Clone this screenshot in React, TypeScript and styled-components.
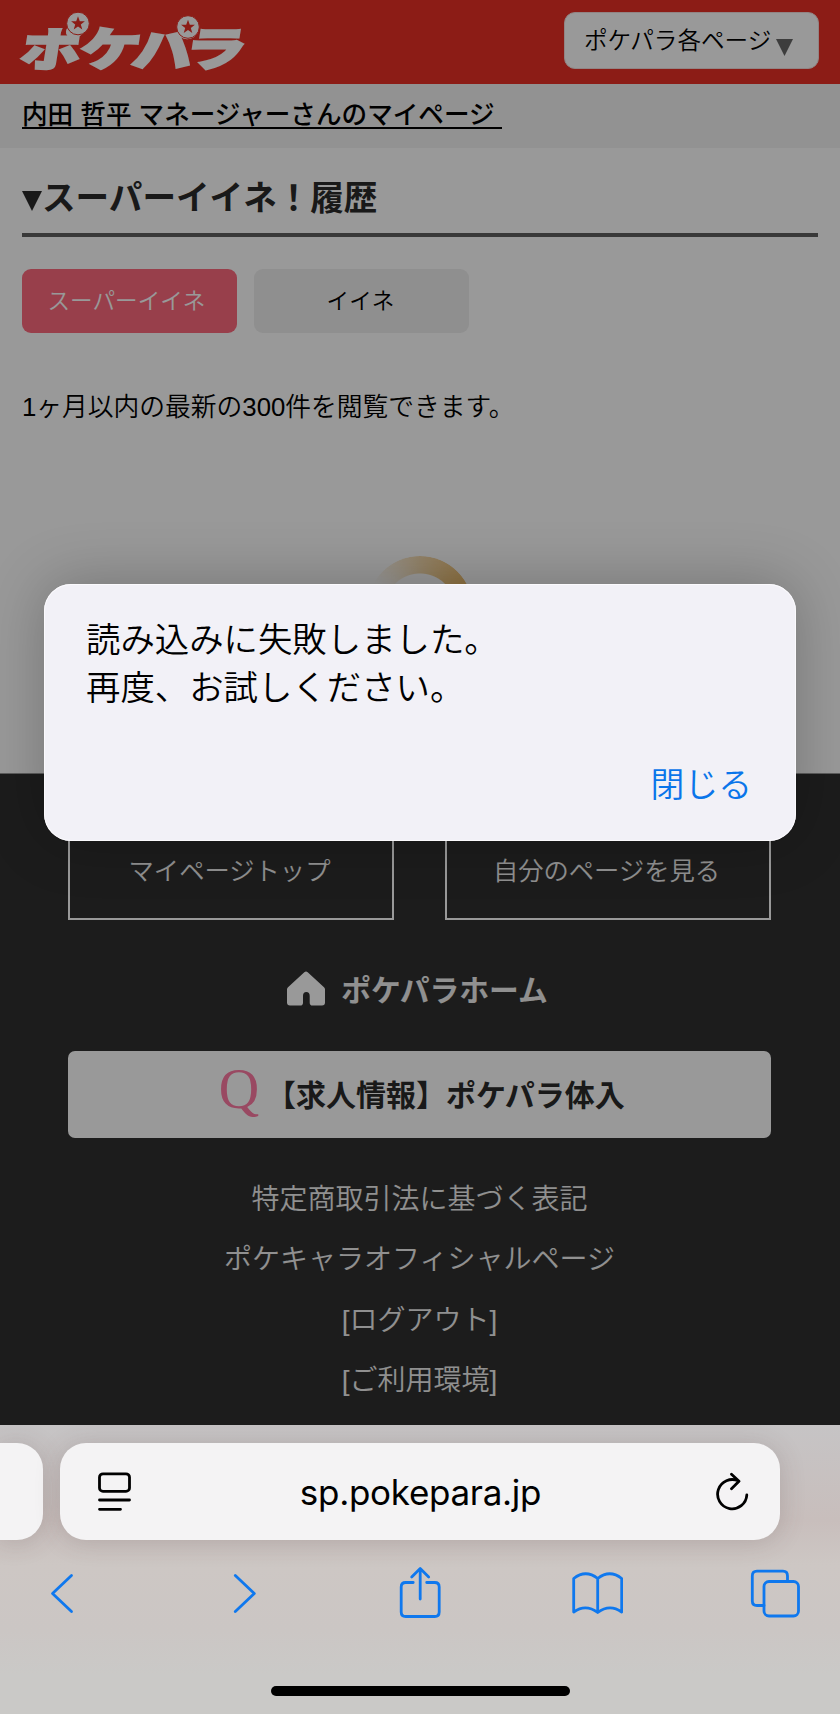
import {useState} from "react";
import styled, {createGlobalStyle} from "styled-components";

const GlobalStyle = createGlobalStyle`
  * {
    box-sizing: border-box;
  }

  body {
    margin: 0;
    background: #cac9c7;
    font-family: "Liberation Sans", "Noto Sans CJK JP", sans-serif;
    font-weight: 350;
    color: #000;
  }

  button {
    font-family: inherit;
    font-weight: inherit;
    padding: 0;
    border: 0;
    background: none;
  }
`

const Screen = styled.div`
  width: 840px;
  height: 1714px;
  display: flex;
  flex-direction: column;
  overflow: hidden;
`

const Page = styled.div`
  position: relative;
  height: 1425px;
  flex: none;
  background: #fff;
  white-space: nowrap;
  overflow: hidden;
`

const Header = styled.header`
  height: 84px;
  background: #e92f25;
  display: flex;
  justify-content: space-between;
  align-items: flex-start;
  padding-right: 21px;
`

const SiteSelect = styled.button`
  width: 255px;
  height: 57px;
  margin-top: 12px;
  border: 1px solid #f3dddc;
  border-radius: 11px;
  background: #fff;
  display: flex;
  align-items: center;
  padding: 0 0 4px 19px;
  font-size: 23.6px;
  color: #000;
`

const SelectArrow = styled.svg`
  width: 17px;
  height: 17px;
  margin: 18px 0 0 5px;
  fill: #666;
`

const UserBar = styled.div`
  height: 64px;
  background: #f3f3f3;
  padding: 0 22px;
`

const UserLink = styled.a`
  display: inline-block;
  height: 45px;
  line-height: 63px;
  border-bottom: 2px solid #000;
  font-size: 25.6px;
  font-weight: 500;
  white-space: pre;
`

const Main = styled.main`
  height: 625px;
  padding: 0 22px;
`

const Title = styled.h1`
  margin: 0;
  height: 89px;
  border-bottom: 4px solid #606060;
  display: flex;
  align-items: center;
  font-size: 33.6px;
  font-weight: 700;
  line-height: 50px;
  color: #2b2b2b;
  padding-top: 17px;
`

const TitleMark = styled.svg`
  width: 20px;
  height: 20px;
  margin-top: 3px;
  fill: #2b2b2b;
`

const Tabs = styled.div`
  display: flex;
  gap: 17px;
  margin-top: 32px;
`

const Tab = styled.button<{ $active: boolean }>`
  width: 215px;
  height: 64px;
  border-radius: 9px;
  background: ${props => props.$active ? "#fd697d" : "#eeeeee"};
  color: ${props => props.$active ? "#fff" : "#000"};
  font-size: 22.6px;
  padding: 0 ${props => props.$active ? "6px" : "2px"} 3px 0;
`

const Note = styled.p`
  margin: 55px 0 0;
  font-size: 25.75px;
  line-height: 38px;
`

const Loader = styled.div`
  width: 106px;
  height: 106px;
  margin: 130px auto 0;
  border-radius: 50%;
  background: conic-gradient(from -60deg, rgba(238, 190, 110, 0) 0deg, rgba(238, 190, 110, 0.55) 60deg, #eebe6e 120deg, #eebe6e 300deg, rgba(238, 190, 110, 0) 360deg);
  mask: radial-gradient(circle, transparent 35px, #000 36px);
`

const Footer = styled.footer`
  height: 652px;
  background: #2f2f2f;
  border-top: 1px solid #9a9a9a;
  color: #f0f0f0;
  display: flex;
  flex-direction: column;
  align-items: center;
`

const FooterButtons = styled.div`
  display: flex;
  gap: 51px;
  margin: 47px 1px 0 0;
`

const OutlineButton = styled.button`
  width: 326px;
  height: 99px;
  border: 2px solid #fff;
  font-size: 25.3px;
  color: #f0f0f0;
  padding: 0 3px 3px 0;
`

const HomeLink = styled.a`
  display: flex;
  align-items: center;
  gap: 16px;
  height: 46px;
  margin: 45px 5px 0 0;
  font-size: 29.8px;
  font-weight: 700;
`

const JobButton = styled.button`
  width: 703px;
  height: 87px;
  margin: 40px 1px 0 0;
  border-radius: 7px;
  background: #fff;
  display: flex;
  align-items: center;
  padding: 0 0 3px 150px;
  font-size: 30px;
  font-weight: 700;
  color: #2b2b2b;
`

const JobMark = styled.span`
  width: 42px;
  margin: -9px 6px 0 0;
  font-family: "Liberation Serif", serif;
  font-size: 56px;
  font-weight: 400;
  line-height: 60px;
  color: #ff7aa3;
`

const FooterLinks = styled.div`
  display: flex;
  flex-direction: column;
  align-items: center;
  margin: 32px 1px 0 0;
`

const FooterLink = styled.a`
  font-size: 28px;
  line-height: 60.4px;
`

const Backdrop = styled.div`
  position: absolute;
  inset: 0;
  background: rgba(0, 0, 0, 0.4);
`

const Dialog = styled.div`
  position: absolute;
  top: 584px;
  left: 44px;
  width: 752px;
  height: 257px;
  border-radius: 27px;
  background: #f2f1f7;
  box-shadow: inset 0 0 0 1px #fbfafd, 0 -2px 60px rgba(0, 0, 0, 0.24);
  padding: 32px 44px 0 42px;
  display: flex;
  flex-direction: column;
`

const DialogText = styled.p`
  margin: 0;
  font-size: 34.4px;
  line-height: 48px;
`

const DialogClose = styled.button`
  align-self: flex-end;
  margin-top: 48px;
  font-size: 33.8px;
  line-height: 50px;
  color: #0a75ea;
`

const Browser = styled.div`
  flex: 1;
  background: linear-gradient(#c6c4c5 0, #c8bebc 95px, #cdc7c4 140px, #cbc6c4 205px, #cac9c7 250px);
  display: flex;
  flex-direction: column;
`

const AddressRow = styled.div`
  display: flex;
  gap: 17px;
  padding-top: 18px;
`

const NeighbourTab = styled.div`
  width: 43px;
  height: 97px;
  border-radius: 0 26px 26px 0;
  background: #f4f3f4;
  box-shadow: 0 2px 26px rgba(80, 60, 60, 0.2);
`

const AddressBar = styled.div`
  width: 720px;
  height: 97px;
  border-radius: 26px;
  background: #f4f3f4;
  box-shadow: 0 2px 26px rgba(80, 60, 60, 0.2);
  display: flex;
  align-items: center;
  justify-content: space-between;
  padding: 0 31px 0 37px;
`

const Address = styled.span`
  font-family: Inter, sans-serif;
  font-size: 35px;
  font-weight: 400;
  letter-spacing: -0.3px;
  padding: 0 5px 0 0;
`

const StrokeIcon = styled.svg`
  display: block;
  fill: none;
  stroke: currentColor;
  stroke-width: 2.8;
  stroke-linecap: round;
  stroke-linejoin: round;
`

const Toolbar = styled.nav`
  height: 54px;
  display: flex;
  justify-content: space-between;
  margin-top: 25px;
  padding: 0 39px 0 36px;
  color: #0f78ee;
`

const HomeIndicator = styled.div`
  width: 299px;
  height: 10px;
  margin: 67px auto 0;
  border-radius: 5px;
  background: #000;
`

const LOGO_STAR = "M0 -7.2 L1.8 -2.3 L6.9 -2.2 L2.8 1 L4.3 5.9 L0 3 L-4.3 5.9 L-2.8 1 L-6.9 -2.2 L-1.8 -2.3 Z"

const LOGO_LETTERS = [
  {char: "ポ", x: 19, width: 60},
  {char: "ケ", x: 78, width: 60},
  {char: "パ", x: 131, width: 60},
  {char: "ラ", x: 183, width: 61},
]

const Logo = () => (
  <svg width="280" height="84" viewBox="0 0 280 84">
    <g
      fill="#fff"
      stroke="#fff"
      strokeWidth="2.4"
      fontFamily="Noto Sans CJK JP"
      fontWeight="900"
      fontSize="46"
    >
      {LOGO_LETTERS.map(letter => (
        <text
          key={letter.char}
          transform={`translate(${letter.x} 65.5) skewX(-9) scale(${letter.width / 46} 1)`}
        >
          {letter.char}
        </text>
      ))}
    </g>
    {[[78, 23.5], [188, 27]].map(([x, y]) => (
      <g key={x} transform={`translate(${x} ${y})`}>
        <circle r="11.3" fill="#fff" stroke="#e92f25" strokeWidth="1"/>
        <path d={LOGO_STAR} fill="#e92f25"/>
      </g>
    ))}
  </svg>
)

const HomeIcon = () => (
  <svg width="38" height="35" viewBox="0 0 38 35">
    <path
      fill="#fff"
      d="M17.3 1.2 Q19 -.4 20.7 1.2 L37 16.3 Q38 17.2 38 18.6 V31.5 Q38 34.5 35 34.5 H25.5 Q22.7 34.5 22.7 31.7 V25 Q22.7 21 19.3 21 Q16 21 16 25 V31.7 Q16 34.5 13.2 34.5 H3 Q0 34.5 0 31.5 V18.6 Q0 17.2 1 16.3 Z"
    />
  </svg>
)

const App = () => {
  const [tab, setTab] = useState("スーパーイイネ")
  const [isOpen, setOpen] = useState(true)

  return (
    <Screen>
      <GlobalStyle/>
      <Page>
        <Header>
          <Logo/>
          <SiteSelect>
            ポケパラ各ページ
            <SelectArrow viewBox="0 0 17 17">
              <path d="M0 0 H17 L8.5 17 Z"/>
            </SelectArrow>
          </SiteSelect>
        </Header>
        <UserBar>
          <UserLink>内田 哲平 マネージャーさんのマイページ </UserLink>
        </UserBar>
        <Main>
          <Title>
            <TitleMark viewBox="0 0 20 20">
              <path d="M0 0 H20 L10 20 Z"/>
            </TitleMark>
            スーパーイイネ！履歴
          </Title>
          <Tabs>
            {["スーパーイイネ", "イイネ"].map(name => (
              <Tab
                key={name}
                $active={name === tab}
                onClick={() => setTab(name)}
              >
                {name}
              </Tab>
            ))}
          </Tabs>
          <Note>1ヶ月以内の最新の300件を閲覧できます。</Note>
          <Loader/>
        </Main>
        <Footer>
          <FooterButtons>
            <OutlineButton>マイページトップ</OutlineButton>
            <OutlineButton>自分のページを見る</OutlineButton>
          </FooterButtons>
          <HomeLink>
            <HomeIcon/>
            ポケパラホーム
          </HomeLink>
          <JobButton>
            <JobMark>Q</JobMark>
            【求人情報】ポケパラ体入
          </JobButton>
          <FooterLinks>
            <FooterLink>特定商取引法に基づく表記</FooterLink>
            <FooterLink>ポケキャラオフィシャルページ</FooterLink>
            <FooterLink>[ログアウト]</FooterLink>
            <FooterLink>[ご利用環境]</FooterLink>
          </FooterLinks>
        </Footer>
        {isOpen && (
          <>
            <Backdrop/>
            <Dialog role="alertdialog">
              <DialogText>
                読み込みに失敗しました。
                <br/>
                再度、お試しください。
              </DialogText>
              <DialogClose onClick={() => setOpen(false)}>閉じる</DialogClose>
            </Dialog>
          </>
        )}
      </Page>
      <Browser>
        <AddressRow>
          <NeighbourTab/>
          <AddressBar>
            <StrokeIcon width="34" height="40" viewBox="0 0 34 40">
              <rect x="2.5" y="1.8" width="30" height="17.6" rx="3.5"/>
              <path d="M2.5 28 H32.5 M2.5 37.3 H23.5"/>
            </StrokeIcon>
            <Address>sp.pokepara.jp</Address>
            <StrokeIcon width="34" height="40" viewBox="715 1470 34 40">
              <path d="M738.5 1479 A14.6 14.6 0 1 0 746.8 1493 M731.5 1472.2 L739 1479.2 L731.5 1486.8"/>
            </StrokeIcon>
          </AddressBar>
        </AddressRow>
        <Toolbar>
          <StrokeIcon width="52" height="54" viewBox="36 1565 52 54">
            <path d="M71.5 1575.5 L52.5 1593.5 L71.5 1611.5"/>
          </StrokeIcon>
          <StrokeIcon width="52" height="54" viewBox="214.2 1565 52 54">
            <path d="M235.5 1575.5 L254.5 1593.5 L235.5 1611.5"/>
          </StrokeIcon>
          <StrokeIcon width="52" height="54" viewBox="393.3 1565 52 54">
            <path d="M413.5 1582.5 H406 Q401.5 1582.5 401.5 1587 V1612 Q401.5 1616.5 406 1616.5 H435 Q439.5 1616.5 439.5 1612 V1587 Q439.5 1582.5 435 1582.5 H427 M420.5 1599 V1569 M412 1577 L420.5 1568.5 L429 1577"/>
          </StrokeIcon>
          <StrokeIcon width="52" height="54" viewBox="570.8 1565 52 54">
            <path d="M597.5 1578.5 Q585.5 1569 573.5 1578.5 V1612 Q585.5 1603.5 597.5 1612.5 Q609.5 1603.5 621.5 1612 V1578.5 Q609.5 1569 597.5 1578.5 V1612.5"/>
          </StrokeIcon>
          <StrokeIcon width="52" height="54" viewBox="749 1565 52 54">
            <rect x="764" y="1581.5" width="34.5" height="34.5" rx="5"/>
            <path d="M764 1605.5 H757 Q752.3 1605.5 752.3 1601 V1576 Q752.3 1571.2 757 1571.2 H783 Q787.5 1571.2 787.5 1576 V1581"/>
          </StrokeIcon>
        </Toolbar>
        <HomeIndicator/>
      </Browser>
    </Screen>
  )
}

export default App
